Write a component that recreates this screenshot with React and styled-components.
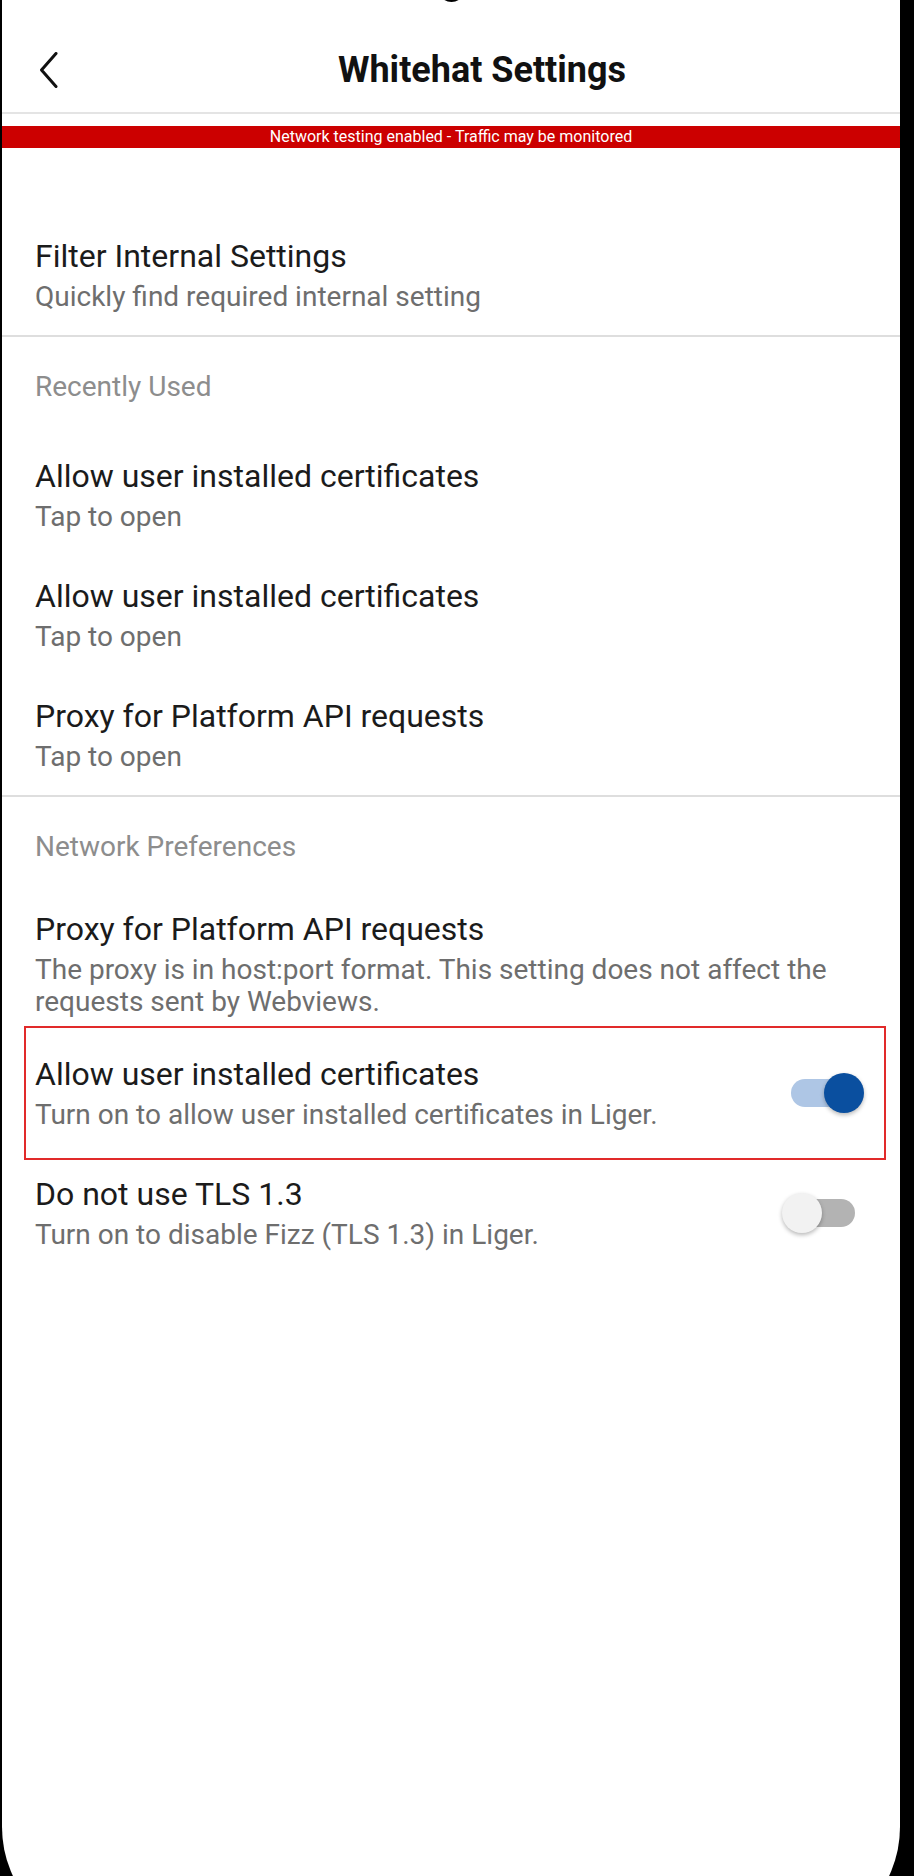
import styled, { createGlobalStyle, css } from "styled-components"

const GlobalStyle = createGlobalStyle`
  html, body {
    margin: 0;
    padding: 0;
    background: #000;
  }
  body {
    font-family: Roboto, "Noto Sans", "Liberation Sans", sans-serif;
    overflow: hidden;
  }
  * {
    box-sizing: border-box;
  }
`

const recentItems = [
  { title: "Allow user installed certificates", summary: "Tap to open" },
  { title: "Allow user installed certificates", summary: "Tap to open" },
  { title: "Proxy for Platform API requests", summary: "Tap to open" },
]

const App = () => {
  return (
    <Device>
      <GlobalStyle />
      <Camera />
      <Screen>
        <TopBar>
          <BackButton aria-label="Back">
            <svg width="18" height="36" viewBox="0 0 18 36" fill="none">
              <polyline
                points="16,1.5 1.5,18 16,34.5"
                stroke="#111"
                strokeWidth="3"
                strokeLinecap="round"
                strokeLinejoin="round"
              />
            </svg>
          </BackButton>
          <Title>Whitehat Settings</Title>
        </TopBar>
        <Banner>Network testing enabled - Traffic may be monitored</Banner>

        <List>
          <Row>
            <RowText>
              <RowTitle>Filter Internal Settings</RowTitle>
              <RowSummary>Quickly find required internal setting</RowSummary>
            </RowText>
          </Row>
          <Divider />

          <SectionHeader>Recently Used</SectionHeader>
          {recentItems.map((item, i) => (
            <Row key={i}>
              <RowText>
                <RowTitle>{item.title}</RowTitle>
                <RowSummary>{item.summary}</RowSummary>
              </RowText>
            </Row>
          ))}
          <Divider />

          <SectionHeader>Network Preferences</SectionHeader>
          <Row $tight>
            <RowText>
              <RowTitle>Proxy for Platform API requests</RowTitle>
              <RowSummary>
                The proxy is in host:port format. This setting does not affect the requests sent by
                Webviews.
              </RowSummary>
            </RowText>
          </Row>
          <Row $highlighted>
            <RowText>
              <RowTitle>Allow user installed certificates</RowTitle>
              <RowSummary>Turn on to allow user installed certificates in Liger.</RowSummary>
            </RowText>
            <Switch $on>
              <Track $on />
              <Knob $on />
            </Switch>
          </Row>
          <Row>
            <RowText>
              <RowTitle>Do not use TLS 1.3</RowTitle>
              <RowSummary>Turn on to disable Fizz (TLS 1.3) in Liger.</RowSummary>
            </RowText>
            <Switch>
              <Track />
              <Knob />
            </Switch>
          </Row>
        </List>
      </Screen>
    </Device>
  )
}

const Device = styled.div`
  position: relative;
  width: 914px;
  height: 1876px;
  padding: 0 14px 0 2px;
  background: #000;
  overflow: hidden;
`

const Camera = styled.div`
  position: absolute;
  top: -25px;
  left: 438px;
  width: 27px;
  height: 27px;
  border-radius: 50%;
  background: #000;
  z-index: 2;
`

const Screen = styled.div`
  display: flex;
  flex-direction: column;
  min-height: 1942px;
  background: #fff;
  border-radius: 0 0 115px 115px;
`

const TopBar = styled.header`
  display: flex;
  align-items: center;
  height: 114px;
  padding-top: 28px;
  border-bottom: 2px solid #e4e4e4;
`

const BackButton = styled.div`
  display: flex;
  align-items: center;
  width: 62px;
  padding-left: 38px;
`

const Title = styled.h1`
  flex: 1;
  margin: 0;
  text-align: center;
  font-size: 36px;
  font-weight: 700;
  color: #111;
`

const Banner = styled.div`
  margin-top: 12px;
  height: 22px;
  background: #cc0000;
  color: #fff;
  font-size: 16px;
  line-height: 22px;
  text-align: center;
`

const List = styled.div`
  display: flex;
  flex-direction: column;
  padding-top: 67px;
`

/* the highlighted row gets a red outline drawn over it, a little taller than the row */
const Row = styled.div`
  position: relative;
  display: flex;
  align-items: center;
  gap: 24px;
  padding: ${(p) => (p.$tight ? "15px" : "22px")} 36px ${(p) => (p.$tight ? "15px" : "22px")} 33px;

  ${(p) =>
    p.$highlighted &&
    css`
      &::after {
        content: "";
        position: absolute;
        top: -7px;
        bottom: -7px;
        left: 22px;
        right: 14px;
        border: 2px solid #e12a2a;
        pointer-events: none;
      }
    `}
`

const RowText = styled.div`
  flex: 1;
  min-width: 0;
`

const RowTitle = styled.div`
  font-size: 32px;
  line-height: 38px;
  color: #1b1b1b;
`

const RowSummary = styled.div`
  margin-top: 6px;
  font-size: 28px;
  line-height: 32px;
  color: #6e6e6e;
`

const SectionHeader = styled.div`
  padding: 34px 33px 32px;
  font-size: 28px;
  line-height: 32px;
  color: #8d8d8d;
`

const Divider = styled.div`
  height: 2px;
  background: #dedede;
`

const Switch = styled.div`
  position: relative;
  flex-shrink: 0;
  width: 82px;
  height: 40px;
`

const Track = styled.div`
  position: absolute;
  top: 6px;
  left: 9px;
  right: 9px;
  height: 28px;
  border-radius: 14px;
  background: ${(p) => (p.$on ? "#aec6e5" : "#b3b3b3")};
`

const Knob = styled.div`
  position: absolute;
  top: 0;
  left: ${(p) => (p.$on ? "42px" : "0")};
  width: 40px;
  height: 40px;
  border-radius: 50%;
  background: ${(p) => (p.$on ? "#0a4f9f" : "#f2f2f2")};
  box-shadow: 0 2px 4px rgba(0, 0, 0, 0.28);
`

export default App
